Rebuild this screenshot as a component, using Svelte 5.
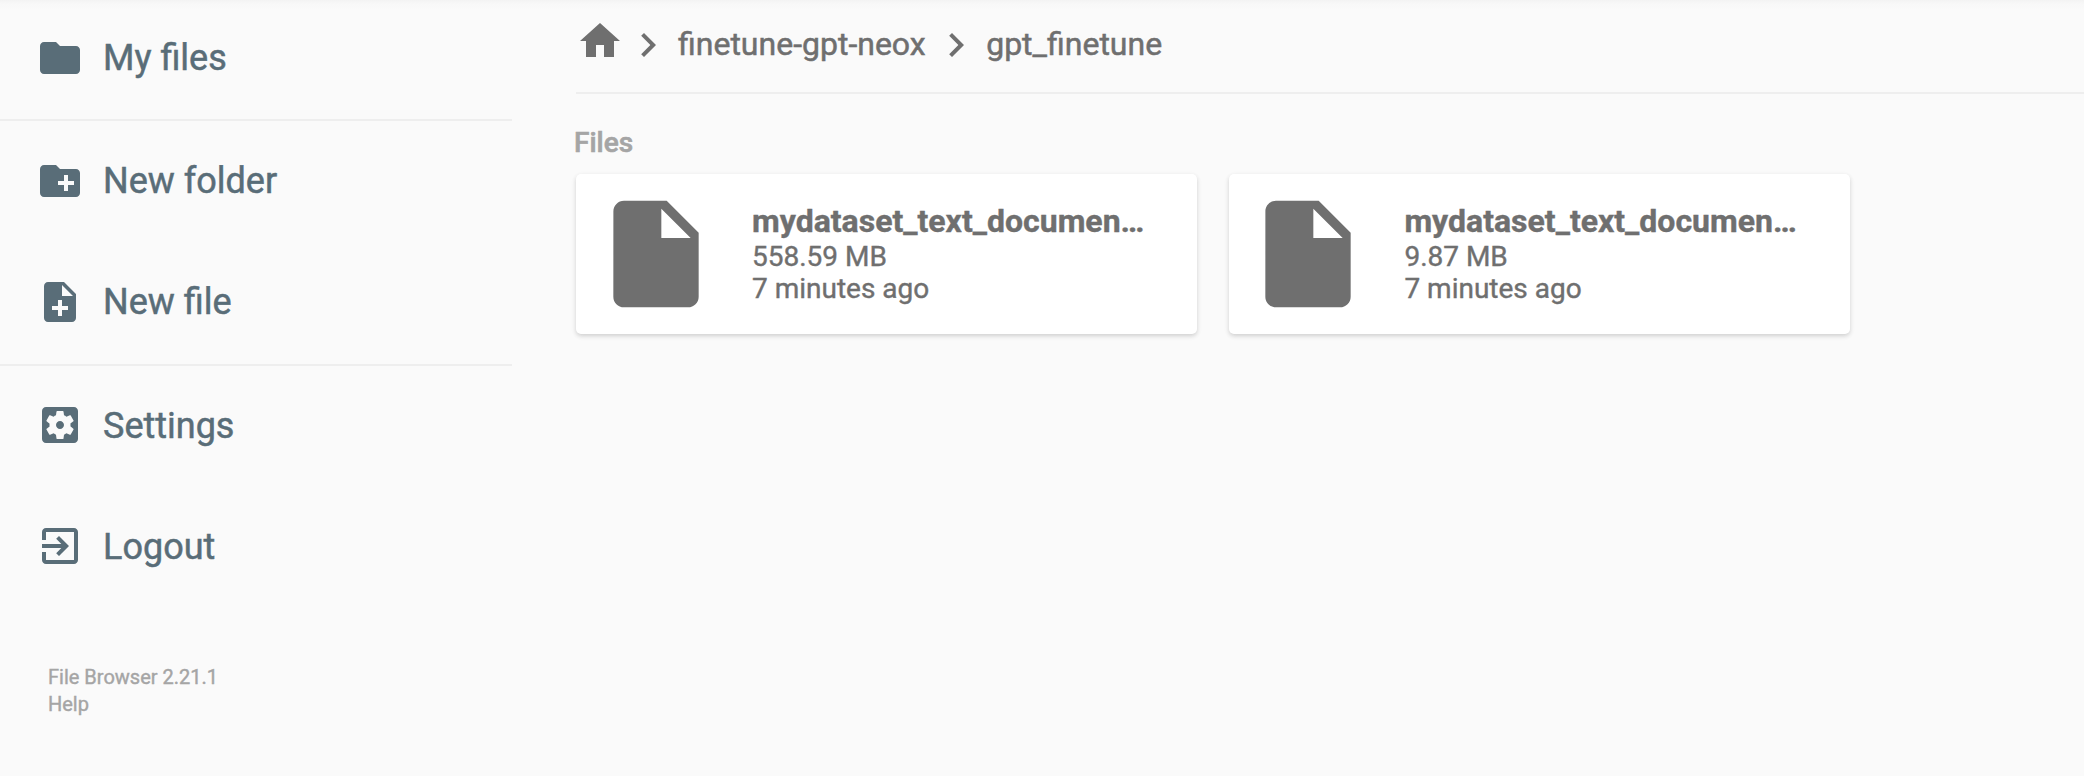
<script>
  const sections = [
    [{ label: 'My files', d: 'M10 4H4c-1.1 0-1.99.9-1.99 2L2 18c0 1.1.9 2 2 2h16c1.1 0 2-.9 2-2V8c0-1.1-.9-2-2-2h-8l-2-2z' }],
    [
      { label: 'New folder', d: 'M20 6h-8l-2-2H4c-1.11 0-1.99.89-1.99 2L2 18c0 1.11.89 2 2 2h16c1.11 0 2-.89 2-2V8c0-1.11-.89-2-2-2zm-1 8h-3v3h-2v-3h-3v-2h3V9h2v3h3v2z' },
      { label: 'New file', d: 'M14 2H6c-1.1 0-1.99.9-1.99 2L4 20c0 1.1.89 2 1.99 2H18c1.1 0 2-.9 2-2V8l-6-6zm2 14h-3v3h-2v-3H8v-2h3v-3h2v3h3v2zm-3-7V3.5L18.5 9H13z' }
    ],
    [
      { label: 'Settings', d: 'M12 10c-1.1 0-2 .9-2 2s.9 2 2 2 2-.9 2-2-.9-2-2-2zm7-7H5c-1.11 0-2 .9-2 2v14c0 1.1.89 2 2 2h14c1.11 0 2-.9 2-2V5c0-1.1-.89-2-2-2zm-1.75 9c0 .23-.02.46-.05.68l1.48 1.16c.13.11.17.3.08.45l-1.4 2.42c-.09.15-.27.21-.43.15l-1.74-.7c-.36.28-.76.51-1.18.69l-.26 1.85c-.03.17-.18.3-.35.3h-2.8c-.17 0-.32-.13-.35-.29l-.26-1.85c-.43-.18-.82-.41-1.18-.69l-1.74.7c-.16.06-.34 0-.43-.15l-1.4-2.42c-.09-.15-.05-.34.08-.45l1.48-1.16c-.03-.23-.05-.46-.05-.69 0-.23.02-.46.05-.68l-1.48-1.16c-.13-.11-.17-.3-.08-.45l1.4-2.42c.09-.15.27-.21.43-.15l1.74.7c.36-.28.76-.51 1.18-.69l.26-1.85c.03-.17.18-.3.35-.3h2.8c.17 0 .32.13.35.29l.26 1.85c.43.18.82.41 1.18.69l1.74-.7c.16-.06.34 0 .43.15l1.4 2.42c.09.15.05.34-.08.45l-1.48 1.16c.03.23.05.46.05.69z' },
      { label: 'Logout', d: 'M10.09 15.59 11.5 17l5-5-5-5-1.41 1.41L12.67 11H3v2h9.67l-2.58 2.59zM19 3H5c-1.11 0-2 .9-2 2v4h2V5h14v14H5v-4H3v4c0 1.1.89 2 2 2h14c1.1 0 2-.9 2-2V5c0-1.1-.9-2-2-2z' }
    ]
  ];
  const crumbs = ['finetune-gpt-neox', 'gpt_finetune'];
  const files = [
    { name: 'mydataset_text_documen…', size: '558.59 MB', modified: '7 minutes ago' },
    { name: 'mydataset_text_documen…', size: '9.87 MB', modified: '7 minutes ago' }
  ];
</script>

{#snippet icon(d)}
  <svg viewBox="0 0 24 24" aria-hidden="true"><path {d} /></svg>
{/snippet}

<div class="page">
  <nav>
    {#each sections as section}
      <div class="section">
        {#each section as item}
          <button class="action">{@render icon(item.d)}<span>{item.label}</span></button>
        {/each}
      </div>
    {/each}
    <div class="credits">
      <span>File Browser 2.21.1</span>
      <span>Help</span>
    </div>
  </nav>

  <main>
    <div class="breadcrumbs">
      <span class="home">{@render icon('M10 20v-6h4v6h5v-8h3L12 3 2 12h3v8z')}</span>
      {#each crumbs as crumb}
        <span class="chevron">{@render icon('M10 6L8.59 7.41 13.17 12l-4.58 4.59L10 18l6-6z')}</span>
        <span class="crumb">{crumb}</span>
      {/each}
    </div>
    <h2>Files</h2>
    <div class="files">
      {#each files as file}
        <article>
          {@render icon('M6 2c-1.1 0-1.99.9-1.99 2L4 20c0 1.1.89 2 1.99 2H18c1.1 0 2-.9 2-2V8l-6-6H6zm7 7V3.5L18.5 9H13z')}
          <div class="info">
            <p class="name">{file.name}</p>
            <p>{file.size}</p>
            <p>{file.modified}</p>
          </div>
        </article>
      {/each}
    </div>
  </main>
</div>

<style>
  :global(body) {
    background: #fafafa;
  }
  .page {
    box-sizing: border-box;
    display: flex;
    width: 2084px;
    height: 776px;
    overflow: hidden;
    background: linear-gradient(#f3f3f3, #f8f8f8 4px, #fafafa 10px) no-repeat #fafafa;
    background-size: 100% 10px;
    color: #6f6f6f;
    font-family: Roboto, sans-serif;
  }
  svg {
    display: block;
    flex: none;
    width: 48px;
    height: 48px;
    fill: currentColor;
  }
  nav {
    width: 512px;
    margin-right: 64px;
    flex: none;
  }
  .section {
    box-sizing: border-box;
    border-bottom: 2px solid #eeeeee;
  }
  .section:first-child {
    height: 121px;
  }
  .section:nth-child(2) {
    height: 245px;
  }
  .section:nth-child(3) {
    border: 0;
  }
  .action {
    display: flex;
    align-items: center;
    gap: 19px;
    width: 100%;
    height: 121px;
    padding: 0 0 2px 36px;
    border: 0;
    background: none;
    color: #596d78;
    font: 400 36px/48px Roboto, sans-serif;
    text-align: left;
    -webkit-text-stroke: 0.5px;
  }
  .section:first-child .action {
    height: 118px;
  }
  .section:nth-child(3) svg {
    margin-bottom: 2px;
  }
  .credits {
    display: flex;
    flex-direction: column;
    margin: 56px 0 0 48px;
    color: #a5a5a5;
    font-size: 20px;
    line-height: 27px;
    -webkit-text-stroke: 0.4px;
  }
  main {
    flex: 1;
  }
  .breadcrumbs {
    display: flex;
    align-items: center;
    height: 94px;
    box-sizing: border-box;
    padding-bottom: 4px;
    border-bottom: 2px solid #eeeeee;
    font-size: 32px;
    line-height: 40px;
    -webkit-text-stroke: 0.5px;
  }
  .home {
    padding-bottom: 6px;
  }
  .chevron {
    padding-top: 2px;
  }
  .crumb {
    padding: 0 6.5px 0 6px;
  }
  h2 {
    margin: 32px 0 15px -2px;
    color: #a5a5a5;
    font-size: 28px;
    font-weight: 500;
    line-height: 33px;
    -webkit-text-stroke: 0.6px;
  }
  .files {
    display: flex;
    gap: 32px;
  }
  article {
    box-sizing: border-box;
    display: flex;
    align-items: center;
    width: 621px;
    height: 160px;
    padding: 16px;
    border-radius: 5px;
    background: #fff;
    box-shadow: 0 2px 6px rgba(0, 0, 0, 0.06), 0 2px 4px rgba(0, 0, 0, 0.12);
  }
  article:nth-child(2) {
    padding-left: 15.4px;
  }
  article svg {
    width: 128px;
    height: 128px;
  }
  .info {
    margin-left: 32px;
  }
  p {
    margin: 0;
    font-size: 28px;
    line-height: 32px;
    white-space: nowrap;
    -webkit-text-stroke: 0.4px;
  }
  .name {
    margin-bottom: 1px;
    font-size: 32px;
    font-weight: 700;
    line-height: 37px;
  }
</style>
